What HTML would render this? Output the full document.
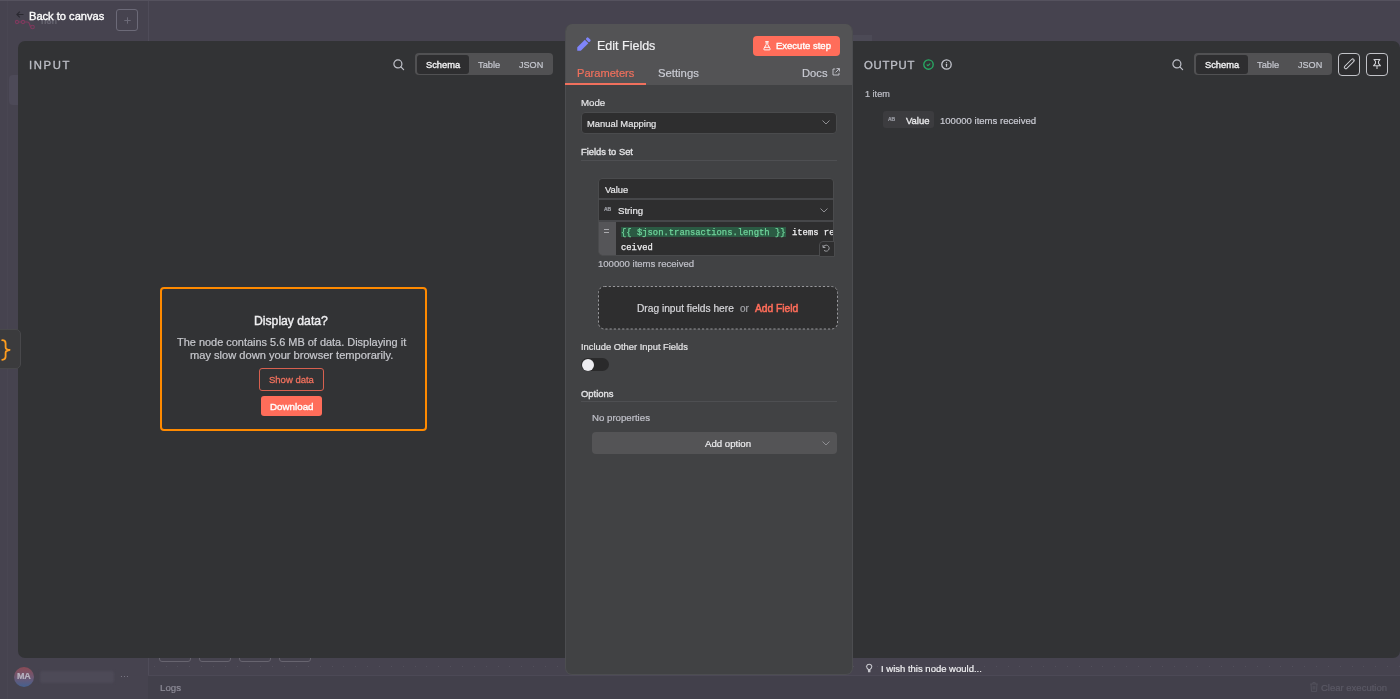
<!DOCTYPE html>
<html><head><meta charset="utf-8">
<style>
*{box-sizing:border-box;margin:0;padding:0}
html,body{width:1400px;height:699px;overflow:hidden;background:#46434f;font-family:"Liberation Sans",sans-serif;position:relative}
.a{position:absolute}
.t{position:absolute;white-space:nowrap;line-height:1;will-change:transform}
svg{position:absolute;overflow:visible}
</style></head><body>

<!-- dimmed canvas background -->
<div class="a" style="left:148px;top:0;width:1px;height:699px;background:#4f4c59"></div>
<div class="a" style="left:7px;top:0;width:1px;height:699px;background:#494652"></div>
<div class="a" style="left:9px;top:75px;width:20px;height:30px;background:#4d4a58;border-radius:4px"></div>
<div class="a" style="left:148px;top:675px;width:1252px;height:1px;background:#4c4956"></div>
<div class="a" style="left:148px;top:676px;width:1252px;height:23px;background:#42404b"></div>

<div class="a" style="left:0;top:0;width:1400px;height:1px;background:#55525e"></div>
<div class="a" style="left:153.68px;top:666.4px;width:1px;height:1px;background:#53505c"></div><div class="a" style="left:165.54px;top:666.4px;width:1px;height:1px;background:#53505c"></div><div class="a" style="left:177.40px;top:666.4px;width:1px;height:1px;background:#53505c"></div><div class="a" style="left:189.26px;top:666.4px;width:1px;height:1px;background:#53505c"></div><div class="a" style="left:201.12px;top:666.4px;width:1px;height:1px;background:#53505c"></div><div class="a" style="left:212.98px;top:666.4px;width:1px;height:1px;background:#53505c"></div><div class="a" style="left:224.84px;top:666.4px;width:1px;height:1px;background:#53505c"></div><div class="a" style="left:236.70px;top:666.4px;width:1px;height:1px;background:#53505c"></div><div class="a" style="left:248.56px;top:666.4px;width:1px;height:1px;background:#53505c"></div><div class="a" style="left:260.42px;top:666.4px;width:1px;height:1px;background:#53505c"></div><div class="a" style="left:272.28px;top:666.4px;width:1px;height:1px;background:#53505c"></div><div class="a" style="left:284.14px;top:666.4px;width:1px;height:1px;background:#53505c"></div><div class="a" style="left:296.00px;top:666.4px;width:1px;height:1px;background:#53505c"></div><div class="a" style="left:307.86px;top:666.4px;width:1px;height:1px;background:#53505c"></div><div class="a" style="left:319.72px;top:666.4px;width:1px;height:1px;background:#53505c"></div><div class="a" style="left:331.58px;top:666.4px;width:1px;height:1px;background:#53505c"></div><div class="a" style="left:343.44px;top:666.4px;width:1px;height:1px;background:#53505c"></div><div class="a" style="left:355.30px;top:666.4px;width:1px;height:1px;background:#53505c"></div><div class="a" style="left:367.16px;top:666.4px;width:1px;height:1px;background:#53505c"></div><div class="a" style="left:379.02px;top:666.4px;width:1px;height:1px;background:#53505c"></div><div class="a" style="left:390.88px;top:666.4px;width:1px;height:1px;background:#53505c"></div><div class="a" style="left:402.74px;top:666.4px;width:1px;height:1px;background:#53505c"></div><div class="a" style="left:414.60px;top:666.4px;width:1px;height:1px;background:#53505c"></div><div class="a" style="left:426.46px;top:666.4px;width:1px;height:1px;background:#53505c"></div><div class="a" style="left:438.32px;top:666.4px;width:1px;height:1px;background:#53505c"></div><div class="a" style="left:450.18px;top:666.4px;width:1px;height:1px;background:#53505c"></div><div class="a" style="left:462.04px;top:666.4px;width:1px;height:1px;background:#53505c"></div><div class="a" style="left:473.90px;top:666.4px;width:1px;height:1px;background:#53505c"></div><div class="a" style="left:485.76px;top:666.4px;width:1px;height:1px;background:#53505c"></div><div class="a" style="left:497.62px;top:666.4px;width:1px;height:1px;background:#53505c"></div><div class="a" style="left:509.48px;top:666.4px;width:1px;height:1px;background:#53505c"></div><div class="a" style="left:521.34px;top:666.4px;width:1px;height:1px;background:#53505c"></div><div class="a" style="left:533.20px;top:666.4px;width:1px;height:1px;background:#53505c"></div><div class="a" style="left:545.06px;top:666.4px;width:1px;height:1px;background:#53505c"></div><div class="a" style="left:556.92px;top:666.4px;width:1px;height:1px;background:#53505c"></div><div class="a" style="left:853.42px;top:666.4px;width:1px;height:1px;background:#53505c"></div><div class="a" style="left:865.28px;top:666.4px;width:1px;height:1px;background:#53505c"></div><div class="a" style="left:877.14px;top:666.4px;width:1px;height:1px;background:#53505c"></div><div class="a" style="left:889.00px;top:666.4px;width:1px;height:1px;background:#53505c"></div><div class="a" style="left:900.86px;top:666.4px;width:1px;height:1px;background:#53505c"></div><div class="a" style="left:912.72px;top:666.4px;width:1px;height:1px;background:#53505c"></div><div class="a" style="left:924.58px;top:666.4px;width:1px;height:1px;background:#53505c"></div><div class="a" style="left:936.44px;top:666.4px;width:1px;height:1px;background:#53505c"></div><div class="a" style="left:948.30px;top:666.4px;width:1px;height:1px;background:#53505c"></div><div class="a" style="left:960.16px;top:666.4px;width:1px;height:1px;background:#53505c"></div><div class="a" style="left:972.02px;top:666.4px;width:1px;height:1px;background:#53505c"></div><div class="a" style="left:983.88px;top:666.4px;width:1px;height:1px;background:#53505c"></div><div class="a" style="left:995.74px;top:666.4px;width:1px;height:1px;background:#53505c"></div><div class="a" style="left:1007.60px;top:666.4px;width:1px;height:1px;background:#53505c"></div><div class="a" style="left:1019.46px;top:666.4px;width:1px;height:1px;background:#53505c"></div><div class="a" style="left:1031.32px;top:666.4px;width:1px;height:1px;background:#53505c"></div><div class="a" style="left:1043.18px;top:666.4px;width:1px;height:1px;background:#53505c"></div><div class="a" style="left:1055.04px;top:666.4px;width:1px;height:1px;background:#53505c"></div><div class="a" style="left:1066.90px;top:666.4px;width:1px;height:1px;background:#53505c"></div><div class="a" style="left:1078.76px;top:666.4px;width:1px;height:1px;background:#53505c"></div><div class="a" style="left:1090.62px;top:666.4px;width:1px;height:1px;background:#53505c"></div><div class="a" style="left:1102.48px;top:666.4px;width:1px;height:1px;background:#53505c"></div><div class="a" style="left:1114.34px;top:666.4px;width:1px;height:1px;background:#53505c"></div><div class="a" style="left:1126.20px;top:666.4px;width:1px;height:1px;background:#53505c"></div><div class="a" style="left:1138.06px;top:666.4px;width:1px;height:1px;background:#53505c"></div><div class="a" style="left:1149.92px;top:666.4px;width:1px;height:1px;background:#53505c"></div><div class="a" style="left:1161.78px;top:666.4px;width:1px;height:1px;background:#53505c"></div><div class="a" style="left:1173.64px;top:666.4px;width:1px;height:1px;background:#53505c"></div><div class="a" style="left:1185.50px;top:666.4px;width:1px;height:1px;background:#53505c"></div><div class="a" style="left:1197.36px;top:666.4px;width:1px;height:1px;background:#53505c"></div><div class="a" style="left:1209.22px;top:666.4px;width:1px;height:1px;background:#53505c"></div><div class="a" style="left:1221.08px;top:666.4px;width:1px;height:1px;background:#53505c"></div><div class="a" style="left:1232.94px;top:666.4px;width:1px;height:1px;background:#53505c"></div><div class="a" style="left:1244.80px;top:666.4px;width:1px;height:1px;background:#53505c"></div><div class="a" style="left:1256.66px;top:666.4px;width:1px;height:1px;background:#53505c"></div><div class="a" style="left:1268.52px;top:666.4px;width:1px;height:1px;background:#53505c"></div><div class="a" style="left:1280.38px;top:666.4px;width:1px;height:1px;background:#53505c"></div><div class="a" style="left:1292.24px;top:666.4px;width:1px;height:1px;background:#53505c"></div><div class="a" style="left:1304.10px;top:666.4px;width:1px;height:1px;background:#53505c"></div><div class="a" style="left:1315.96px;top:666.4px;width:1px;height:1px;background:#53505c"></div><div class="a" style="left:1327.82px;top:666.4px;width:1px;height:1px;background:#53505c"></div><div class="a" style="left:1339.68px;top:666.4px;width:1px;height:1px;background:#53505c"></div><div class="a" style="left:1351.54px;top:666.4px;width:1px;height:1px;background:#53505c"></div><div class="a" style="left:1363.40px;top:666.4px;width:1px;height:1px;background:#53505c"></div><div class="a" style="left:1375.26px;top:666.4px;width:1px;height:1px;background:#53505c"></div><div class="a" style="left:1387.12px;top:666.4px;width:1px;height:1px;background:#53505c"></div><div class="a" style="left:1398.98px;top:666.4px;width:1px;height:1px;background:#53505c"></div>
<!-- top-left back to canvas -->
<svg style="left:15px;top:19px" width="22" height="11" viewBox="0 0 22 11"><g fill="none" stroke="#7f3a5e" stroke-width="1.1"><circle cx="2" cy="3" r="1.6"/><circle cx="8" cy="3" r="1.6"/><circle cx="17.5" cy="8" r="1.8"/><path d="M3.6 3H6.4M9.6 3H12.5Q14 3 14.5 5L15 6.5Q15.5 8 15.7 8"/></g></svg>
<div class="t" style="left:41px;top:17px;font-size:9px;font-weight:700;color:#64626e;-webkit-text-stroke:0.2px #64626e">n8n</div>
<svg style="left:16px;top:11px" width="8" height="7" viewBox="0 0 8 7"><path d="M7.5 3.5H1M3.8 0.6L0.9 3.5L3.8 6.4" fill="none" stroke="#2a2930" stroke-width="1.1"/></svg>
<div class="t" style="left:29px;top:11.21px;font-size:11.1px;color:#fdfdfd;-webkit-text-stroke:0.35px #fdfdfd">Back to canvas</div>
<div class="a" style="left:116px;top:9px;width:22px;height:21.5px;border:1px solid #6c6a78;border-radius:3px"></div>
<svg style="left:123.5px;top:16.5px" width="7" height="7" viewBox="0 0 7 7"><path d="M3.5 0.3V6.7M0.3 3.5H6.7" stroke="#6c6a78" stroke-width="1"/></svg>

<!-- bottom-left sidebar user -->
<div class="a" style="left:14px;top:667px;width:20px;height:20px;border-radius:50%;background:linear-gradient(180deg,#8a4a55 0%,#6f5872 50%,#45608f 100%)"></div>
<div class="t" style="left:16.5px;top:672px;font-size:9px;font-weight:700;color:#b7b3c0;letter-spacing:-0.3px;-webkit-text-stroke:0.2px #b7b3c0">MA</div>
<div class="a" style="left:40px;top:671px;width:74px;height:12px;background:#4d4a57;border-radius:2px;filter:blur(1px)"></div>
<div class="t" style="left:120px;top:672px;font-size:9px;color:#7b7986;-webkit-text-stroke:0.2px #7b7986">···</div>

<!-- canvas node buttons bottoms -->
<div class="a" style="left:159px;top:640px;width:32px;height:22px;border:1px solid #67646f;border-radius:3px"></div>
<div class="a" style="left:199px;top:640px;width:32px;height:22px;border:1px solid #67646f;border-radius:3px"></div>
<div class="a" style="left:239px;top:640px;width:32px;height:22px;border:1px solid #67646f;border-radius:3px"></div>
<div class="a" style="left:279px;top:640px;width:32px;height:22px;border:1px solid #67646f;border-radius:3px"></div>
<div class="t" style="left:160px;top:682.5px;font-size:9.7px;color:#8e8c98;-webkit-text-stroke:0.2px #8e8c98">Logs</div>

<!-- INPUT PANEL -->
<div class="a" style="left:18px;top:41px;width:560px;height:617px;background:#323335;border-radius:7px"></div>
<div class="t" style="left:28.6px;top:59.6px;font-size:11.3px;font-weight:400;color:#bcbec6;letter-spacing:1.6px;-webkit-text-stroke:0.35px #bcbec6">INPUT</div>
<svg style="left:393px;top:58.5px" width="12" height="12" viewBox="0 0 12 12"><circle cx="4.9" cy="4.9" r="4" fill="none" stroke="#c0c2ca" stroke-width="1.2"/><path d="M7.9 7.9L10.6 10.6" stroke="#c0c2ca" stroke-width="1.2" stroke-linecap="round"/></svg>
<div class="a" style="left:415px;top:53px;width:138px;height:22px;background:#515153;border-radius:4px"></div>
<div class="a" style="left:417px;top:55px;width:52px;height:18.5px;background:#2e2e30;border-radius:3px"></div>
<div class="t" style="left:425.5px;top:60.9px;font-size:9.3px;color:#f2f2f4;-webkit-text-stroke:0.35px #f2f2f4">Schema</div>
<div class="t" style="left:478px;top:60.8px;font-size:9.3px;color:#c6c8d0;-webkit-text-stroke:0.2px #c6c8d0">Table</div>
<div class="t" style="left:518.5px;top:60.8px;font-size:9.1px;color:#c6c8d0;-webkit-text-stroke:0.2px #c6c8d0">JSON</div>

<!-- left side json tab -->
<div class="a" style="left:-6px;top:329px;width:27px;height:40px;background:#3b3b3d;border:1px solid #48484b;border-radius:5px"></div>
<svg style="left:1px;top:339px" width="10" height="22" viewBox="0 0 10 22"><path d="M1.2 1.2Q4.6 1.2 4.6 4.4V8.2Q4.6 10.6 8.6 11Q4.6 11.4 4.6 13.8V17.6Q4.6 20.8 1.2 20.8" fill="none" stroke="#ff9d1f" stroke-width="1.8" stroke-linecap="round" stroke-linejoin="round"/></svg>

<!-- display data box -->
<div class="a" style="left:160px;top:287px;width:267px;height:144px;border:2px solid #ff8a00;border-radius:4px"></div>
<div class="t" style="left:254px;top:314.5px;font-size:12.2px;color:#eeeef0;-webkit-text-stroke:0.4px #eeeef0">Display data?</div>
<div class="t" style="left:176.5px;top:336.8px;font-size:10.95px;color:#c8c9ce;-webkit-text-stroke:0.2px #c8c9ce">The node contains 5.6 MB of data. Displaying it</div>
<div class="t" style="left:189.5px;top:349.7px;font-size:11.1px;color:#c8c9ce;-webkit-text-stroke:0.2px #c8c9ce">may slow down your browser temporarily.</div>
<div class="a" style="left:259px;top:368px;width:65px;height:23px;border:1px solid #d7604f;border-radius:3px"></div>
<div class="t" style="left:268.7px;top:375.1px;font-size:9.5px;color:#f0705d;-webkit-text-stroke:0.3px #f0705d">Show data</div>
<div class="a" style="left:260.5px;top:396px;width:61.5px;height:19.5px;background:#ff6d5a;border-radius:3px"></div>
<div class="t" style="left:270px;top:401.9px;font-size:9.8px;color:#fff;-webkit-text-stroke:0.35px #fff">Download</div>

<!-- OUTPUT PANEL -->
<div class="a" style="left:840px;top:41px;width:560px;height:617px;background:#323335;border-radius:7px"></div>
<div class="t" style="left:864.4px;top:59.6px;font-size:11.3px;font-weight:400;color:#bcbec6;letter-spacing:0.8px;-webkit-text-stroke:0.35px #bcbec6">OUTPUT</div>
<svg style="left:923px;top:58.8px" width="11" height="11" viewBox="0 0 11 11"><circle cx="5.5" cy="5.5" r="4.7" fill="none" stroke="#28aa64" stroke-width="1.35"/><path d="M4.1 5.9L5 6.7L6.9 4.8" fill="none" stroke="#28aa64" stroke-width="1.2" stroke-linecap="round" stroke-linejoin="round"/></svg>
<svg style="left:941px;top:58.8px" width="11" height="11" viewBox="0 0 11 11"><circle cx="5.5" cy="5.5" r="4.7" fill="none" stroke="#c4c6ce" stroke-width="1.3"/><path d="M5.5 5.3V7.3" stroke="#c4c6ce" stroke-width="1.2" stroke-linecap="round"/><circle cx="5.5" cy="3.7" r="0.6" fill="#c4c6ce"/></svg>
<svg style="left:1172px;top:58.5px" width="12" height="12" viewBox="0 0 12 12"><circle cx="4.9" cy="4.9" r="4" fill="none" stroke="#c0c2ca" stroke-width="1.2"/><path d="M7.9 7.9L10.6 10.6" stroke="#c0c2ca" stroke-width="1.2" stroke-linecap="round"/></svg>
<div class="a" style="left:1194px;top:53px;width:138px;height:22px;background:#515153;border-radius:4px"></div>
<div class="a" style="left:1196px;top:55px;width:52px;height:18.5px;background:#2e2e30;border-radius:3px"></div>
<div class="t" style="left:1204.5px;top:60.9px;font-size:9.3px;color:#f2f2f4;-webkit-text-stroke:0.35px #f2f2f4">Schema</div>
<div class="t" style="left:1257px;top:60.8px;font-size:9.3px;color:#c6c8d0;-webkit-text-stroke:0.2px #c6c8d0">Table</div>
<div class="t" style="left:1297.5px;top:60.8px;font-size:9.1px;color:#c6c8d0;-webkit-text-stroke:0.2px #c6c8d0">JSON</div>
<div class="a" style="left:1337.7px;top:52.8px;width:22.3px;height:23px;border:1px solid #c2c3c8;border-radius:4px;background:#2c2c2e"></div>
<svg style="left:1343px;top:58px" width="12" height="12" viewBox="0 0 12 12"><rect x="0.1" y="4.6" width="12.6" height="3" rx="1.3" transform="rotate(-45 6 6.1)" fill="none" stroke="#d0d1d6" stroke-width="0.95"/><path d="M9.3 1.5L10.6 2.8" stroke="#d0d1d6" stroke-width="0.8"/></svg>
<div class="a" style="left:1366px;top:52.8px;width:22.3px;height:23px;border:1px solid #c2c3c8;border-radius:4px;background:#2c2c2e"></div>
<svg style="left:1371px;top:58px" width="12" height="12" viewBox="0 0 12 12"><path d="M3 1.5H9L7.5 3.3V5.3L9.5 7.8H2.5L4.5 5.3V3.3Z M6 7.8V11" fill="none" stroke="#d0d1d6" stroke-width="1.05" stroke-linejoin="round"/></svg>
<div class="t" style="left:864.5px;top:90px;font-size:9.1px;color:#bfc0c8;-webkit-text-stroke:0.2px #bfc0c8">1 item</div>
<div class="a" style="left:882.5px;top:110.7px;width:51.5px;height:17.7px;background:#3c3c3f;border-radius:3px"></div>
<div class="t" style="left:888px;top:116.5px;font-size:5px;font-weight:700;color:#9c9ea6;-webkit-text-stroke:0.2px #9c9ea6">AB</div>
<div class="t" style="left:905.8px;top:115.72px;font-size:9.45px;color:#e8e8ea;-webkit-text-stroke:0.35px #e8e8ea">Value</div>
<div class="t" style="left:940px;top:115.9px;font-size:9.55px;color:#cacbd3;-webkit-text-stroke:0.2px #cacbd3">100000 items received</div>
<svg style="left:865.8px;top:662.8px" width="7" height="10" viewBox="0 0 7 10"><path d="M2.2 6.2Q0.6 5 0.6 3.2A2.7 2.7 0 0 1 5.8 3.2Q5.8 5 4.2 6.2" fill="none" stroke="#c6c6cc" stroke-width="1.1"/><path d="M1.9 6H4.5L4.4 9.2H2Z" fill="#c6c6cc"/></svg>
<div class="t" style="left:880.5px;top:663.9px;font-size:9.5px;color:#f0f0f2;-webkit-text-stroke:0.2px #f0f0f2">I wish this node would...</div>
<svg style="left:1309.5px;top:682px" width="8" height="10" viewBox="0 0 8 10"><path d="M0.3 2H7.7M2.8 2V0.6H5.2V2M1 2L1.5 9.4H6.5L7 2M3.2 4V7.5M4.8 4V7.5" fill="none" stroke="#55535f" stroke-width="0.9"/></svg>
<div class="t" style="left:1321px;top:682.6px;font-size:9.5px;color:#5b5965;-webkit-text-stroke:0.2px #5b5965">Clear execution</div>

<!-- CENTER PANEL -->
<div class="a" style="left:853px;top:35px;width:19px;height:6px;background:#4c4a56"></div>
<div class="a" style="left:565px;top:24px;width:288px;height:651px;background:#414244;border:1px solid #4c4d50;border-top:0;border-radius:7px;overflow:hidden">
  <div class="a" style="left:-1px;top:0;width:290px;height:61px;background:#535355"></div>
</div>
<svg style="left:576px;top:36px" width="16" height="16" viewBox="0 0 16 16"><g transform="translate(1.5 14.5) rotate(-45) scale(1.09)" fill="#7f85fb"><path d="M-0.3 0L2 -2.3H11.8V2.3H2Z"/><rect x="12.6" y="-2.3" width="2.8" height="4.6" rx="1.1"/></g></svg>
<div class="t" style="left:596.5px;top:39.9px;font-size:12.5px;color:#f0f0f2;-webkit-text-stroke:0.2px #f0f0f2">Edit Fields</div>
<div class="a" style="left:753px;top:36px;width:87px;height:20px;background:#ff6d5a;border-radius:4px"></div>
<svg style="left:763.3px;top:40.8px" width="8" height="10" viewBox="0 0 8 10"><path d="M2.7 0.7H5.3M3.2 0.7V3.6L0.9 7.8Q0.5 8.9 1.7 8.9H6.3Q7.5 8.9 7.1 7.8L4.8 3.6V0.7M1.8 6.3H6.2" fill="none" stroke="#fff" stroke-width="0.95" stroke-linejoin="round" stroke-linecap="round"/></svg>
<div class="t" style="left:776.3px;top:41.49px;font-size:9.5px;color:#fff;-webkit-text-stroke:0.35px #fff">Execute step</div>
<div class="t" style="left:577.2px;top:67.8px;font-size:11.1px;color:#f0705d;-webkit-text-stroke:0.2px #f0705d">Parameters</div>
<div class="t" style="left:657.7px;top:67.8px;font-size:11.3px;color:#c9cbd3;-webkit-text-stroke:0.2px #c9cbd3">Settings</div>
<div class="t" style="left:801.8px;top:67.8px;font-size:11.2px;color:#c9cbd3;-webkit-text-stroke:0.2px #c9cbd3">Docs</div>
<svg style="left:832px;top:68px" width="8" height="8" viewBox="0 0 8 8"><path d="M3.2 1H1V7H7V4.8M4.5 0.6H7.4V3.5M7.3 0.7L3.6 4.4" fill="none" stroke="#c9cbd3" stroke-width="0.9"/></svg>
<div class="a" style="left:565px;top:83px;width:81px;height:2px;background:#f0705d"></div>

<div class="t" style="left:580.7px;top:97.5px;font-size:9.7px;color:#e4e4e6;-webkit-text-stroke:0.2px #e4e4e6">Mode</div>
<div class="a" style="left:581px;top:111.5px;width:256px;height:22px;background:#2e2e2f;border:1px solid #4a4b4d;border-radius:4px"></div>
<div class="t" style="left:587px;top:119px;font-size:9.4px;color:#e4e4e6;-webkit-text-stroke:0.2px #e4e4e6">Manual Mapping</div>
<svg style="left:822px;top:120px" width="8" height="5" viewBox="0 0 8 5"><path d="M0.5 0.5L4 4L7.5 0.5" fill="none" stroke="#8e8e92" stroke-width="1"/></svg>
<div class="t" style="left:580.7px;top:147.53px;font-size:9.35px;color:#e4e4e6;-webkit-text-stroke:0.35px #e4e4e6">Fields to Set</div>
<div class="a" style="left:581px;top:160px;width:256px;height:1px;background:#4e4f52"></div>

<!-- field box -->
<div class="a" style="left:598px;top:178px;width:236px;height:78px;background:#2e2e2f;border:1px solid #4a4b4d;border-radius:4px;overflow:hidden">
  <div class="a" style="left:0;top:19px;width:236px;height:2px;background:#46474a"></div>
  <div class="a" style="left:0;top:41px;width:236px;height:2px;background:#46474a"></div>
  <div class="a" style="left:-1px;top:43px;width:18px;height:40px;background:#555558"></div>
</div>
<div class="t" style="left:605px;top:184.8px;font-size:9.4px;color:#e8e8ea;-webkit-text-stroke:0.2px #e8e8ea">Value</div>
<div class="t" style="left:604px;top:206.8px;font-size:5px;font-weight:700;color:#a0a2a8;-webkit-text-stroke:0.2px #a0a2a8">AB</div>
<div class="t" style="left:617.7px;top:206px;font-size:9.6px;color:#e8e8ea;-webkit-text-stroke:0.2px #e8e8ea">String</div>
<svg style="left:819.5px;top:208px" width="8" height="5" viewBox="0 0 8 5"><path d="M0.5 0.5L4 4L7.5 0.5" fill="none" stroke="#8e8e92" stroke-width="1"/></svg>
<div class="a" style="left:604px;top:229px;width:5px;height:1px;background:#aaaaae"></div>
<div class="a" style="left:604px;top:232px;width:5px;height:1px;background:#aaaaae"></div>
<div class="a" style="left:621px;top:227px;width:165px;height:9.5px;background:#2b5a43"></div>
<div class="t" style="left:621.3px;top:228.9px;font-size:8.85px;font-family:'Liberation Mono',monospace;color:#6fd49b;-webkit-text-stroke:0.25px #6fd49b">{{ $json.transactions.length }}</div>
<div class="a" style="left:791px;top:226px;width:42px;height:12px;overflow:hidden"><div class="t" style="left:0.5px;top:2.9px;font-size:8.85px;font-family:'Liberation Mono',monospace;color:#f0f0f2;-webkit-text-stroke:0.25px #f0f0f2">items re</div></div>
<div class="t" style="left:621.3px;top:243.9px;font-size:8.85px;font-family:'Liberation Mono',monospace;color:#f0f0f2;-webkit-text-stroke:0.25px #f0f0f2">ceived</div>
<div class="a" style="left:818.5px;top:240.5px;width:16px;height:16px;background:#2e2e2f;border:1px solid #4a4b4d;border-radius:4px 0 0 0"></div>
<svg style="left:822px;top:244px" width="8" height="8" viewBox="0 0 8 8"><path d="M1.3 3.2A3 3 0 1 1 2 6.3M1 1V3.5H3.4" fill="none" stroke="#a8a9ae" stroke-width="0.9"/></svg>
<div class="t" style="left:598px;top:258.5px;font-size:9.55px;color:#c0c1c9;-webkit-text-stroke:0.2px #c0c1c9">100000 items received</div>

<!-- drag area -->
<svg style="left:598px;top:286px" width="240" height="44" viewBox="0 0 240 44"><rect x="0.5" y="0.5" width="239" height="42.5" rx="6" fill="#2e2e2f" stroke="#98989c" stroke-width="1" stroke-dasharray="2.2 2"/></svg>
<div class="t" style="left:636.5px;top:304px;font-size:10.2px;color:#d8d8dc;-webkit-text-stroke:0.2px #d8d8dc">Drag input fields here</div>
<div class="t" style="left:740.2px;top:303.6px;font-size:10px;color:#a2a3a8;-webkit-text-stroke:0.2px #a2a3a8">or</div>
<div class="t" style="left:755px;top:303.95px;font-size:10.25px;color:#ff6d5a;-webkit-text-stroke:0.5px #ff6d5a">Add Field</div>

<div class="t" style="left:580.5px;top:343.2px;font-size:9.35px;color:#e4e4e6;-webkit-text-stroke:0.2px #e4e4e6">Include Other Input Fields</div>
<div class="a" style="left:581px;top:358px;width:28px;height:13px;background:#2a2a2b;border-radius:7px"></div>
<div class="a" style="left:582px;top:358.5px;width:12px;height:12px;background:#ececf0;border-radius:50%"></div>
<div class="t" style="left:580.7px;top:389.45px;font-size:9.45px;color:#e4e4e6;-webkit-text-stroke:0.35px #e4e4e6">Options</div>
<div class="a" style="left:581px;top:401px;width:256px;height:1px;background:#4e4f52"></div>
<div class="t" style="left:592.2px;top:412.5px;font-size:9.67px;color:#c0c1c9;-webkit-text-stroke:0.2px #c0c1c9">No properties</div>
<div class="a" style="left:592px;top:432px;width:245px;height:22px;background:#545456;border-radius:4px"></div>
<div class="t" style="left:704.8px;top:439.1px;font-size:9.63px;color:#ececee;-webkit-text-stroke:0.2px #ececee">Add option</div>
<svg style="left:822px;top:441px" width="8" height="5" viewBox="0 0 8 5"><path d="M0.5 0.5L4 4L7.5 0.5" fill="none" stroke="#8e8e92" stroke-width="1"/></svg>

</body></html>
